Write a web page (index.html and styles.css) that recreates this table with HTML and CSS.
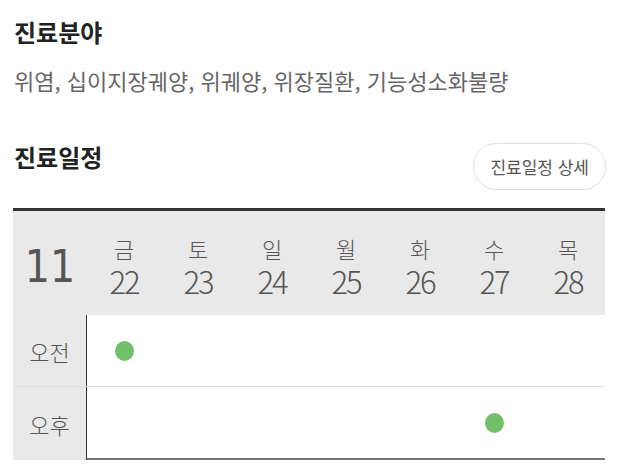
FILE: index.html
```html
<!DOCTYPE html>
<html lang="ko">
<head>
<meta charset="utf-8">
<link rel="stylesheet" href="styles.css">
</head>
<body>
<div class="page">
  <section class="field">
    <h2 class="title">진료분야</h2>
    <p class="desc">위염, 십이지장궤양, 위궤양, 위장질환, 기능성소화불량</p>
  </section>
  <section class="schedule">
    <div class="sched-head">
      <h2 class="title">진료일정</h2>
      <button class="detail-btn">진료일정 상세</button>
    </div>
    <div class="table">
      <div class="row head">
        <div class="month">11</div>
        <div class="day"><span class="dn">금</span><span class="dd">22</span></div>
        <div class="day"><span class="dn">토</span><span class="dd">23</span></div>
        <div class="day"><span class="dn">일</span><span class="dd">24</span></div>
        <div class="day"><span class="dn">월</span><span class="dd">25</span></div>
        <div class="day"><span class="dn">화</span><span class="dd">26</span></div>
        <div class="day"><span class="dn">수</span><span class="dd">27</span></div>
        <div class="day"><span class="dn">목</span><span class="dd">28</span></div>
      </div>
      <div class="row slot am">
        <div class="label">오전</div>
        <div class="cell"><span class="dot"></span></div>
        <div class="cell"></div>
        <div class="cell"></div>
        <div class="cell"></div>
        <div class="cell"></div>
        <div class="cell"></div>
        <div class="cell"></div>
      </div>
      <div class="row slot pm">
        <div class="label">오후</div>
        <div class="cell"></div>
        <div class="cell"></div>
        <div class="cell"></div>
        <div class="cell"></div>
        <div class="cell"></div>
        <div class="cell"><span class="dot"></span></div>
        <div class="cell"></div>
      </div>
    </div>
  </section>
</div>
</body>
</html>
```
FILE: styles.css
```css
* { box-sizing: border-box; }
html, body { margin: 0; padding: 0; background: #fff; }
body {
  font-family: "Noto Sans CJK KR", "Noto Sans", sans-serif;
  color: #222;
}
.page { padding: 14px 19px 0 13px; }
.title {
  margin: 0;
  font-size: 24px;
  font-weight: 700;
  line-height: 36px;
  color: #222;
  padding-left: 1px;
}
.desc {
  margin: 15px 0 0 1px;
  font-size: 22px;
  font-weight: 400;
  line-height: 30px;
  color: #666;
}
.schedule { margin-top: 44px; }
.sched-head {
  display: flex;
  justify-content: space-between;
  align-items: flex-start;
  height: 69px;
}
.detail-btn {
  margin-top: 4px;
  height: 47px;
  padding: 0 16px;
  border: 1px solid #dedede;
  border-radius: 24px;
  background: #fff;
  font-family: inherit;
  font-size: 17px;
  color: #555;
}
.table {
  width: 592px;
  border-top: 3px solid #333;
}
.row {
  display: grid;
  grid-template-columns: repeat(8, 74px);
}
.head {
  background: #e9e9e9;
  height: 104px;
  align-items: center;
}
.month {
  font-family: "DejaVu Sans Condensed", "DejaVu Sans", sans-serif;
  font-weight: 200;
  font-size: 44px;
  color: #555;
  text-align: center;
  padding-top: 6px;
}
.day {
  display: flex;
  flex-direction: column;
  align-items: center;
  color: #555;
  padding-top: 6px;
}
.dn { font-size: 22px; line-height: 30px; font-weight: 300; }
.dd { font-size: 31px; line-height: 36px; font-weight: 300; letter-spacing: -2px; }
.slot { height: 72px; }
.am { border-bottom: 1px solid #ddd; }
.pm { height: 73px; }
.label {
  background: #e9e9e9;
  border-right: 1px solid #333;
  display: flex;
  align-items: center;
  justify-content: center;
  font-size: 22px;
  font-weight: 300;
  color: #555;
}
.pm .cell { border-bottom: 2px solid #777; }
.cell {
  display: flex;
  align-items: center;
  justify-content: center;
}
.dot {
  width: 19px;
  height: 20px;
  border-radius: 50%;
  background: #72bf6a;
}
```
